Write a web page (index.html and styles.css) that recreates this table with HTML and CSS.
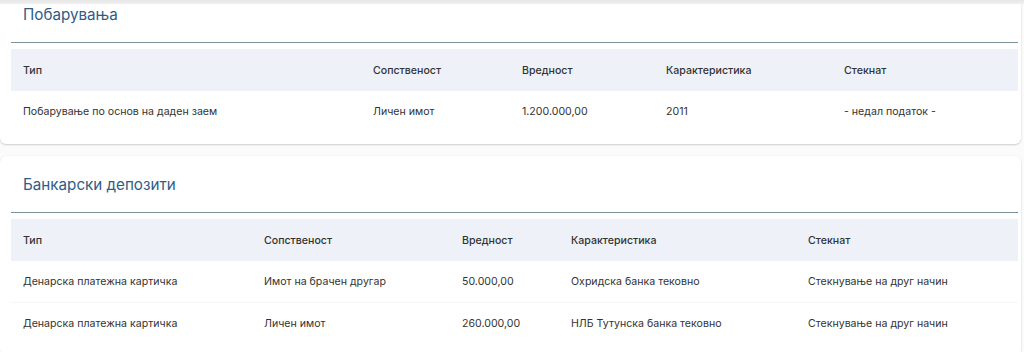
FILE: index.html
```html
<!DOCTYPE html>
<html lang="mk">
<head>
<meta charset="utf-8">
<link rel="stylesheet" href="styles.css">
</head>
<body>
<div class="topshade"></div>
<main class="page">
  <section class="card card-first">
    <h2 class="card-title">Побарувања</h2>
    <table class="data t1">
      <thead>
        <tr><th>Тип</th><th>Сопственост</th><th>Вредност</th><th>Карактеристика</th><th>Стекнат</th></tr>
      </thead>
      <tbody>
        <tr><td>Побарување по основ на даден заем</td><td>Личен имот</td><td>1.200.000,00</td><td>2011</td><td>- недал податок -</td></tr>
      </tbody>
    </table>
  </section>
  <section class="card">
    <h2 class="card-title">Банкарски депозити</h2>
    <table class="data t2">
      <thead>
        <tr><th>Тип</th><th>Сопственост</th><th>Вредност</th><th>Карактеристика</th><th>Стекнат</th></tr>
      </thead>
      <tbody>
        <tr><td>Денарска платежна картичка</td><td>Имот на брачен другар</td><td>50.000,00</td><td>Охридска банка тековно</td><td>Стекнување на друг начин</td></tr>
        <tr><td>Денарска платежна картичка</td><td>Личен имот</td><td>260.000,00</td><td>НЛБ Тутунска банка тековно</td><td>Стекнување на друг начин</td></tr>
      </tbody>
    </table>
  </section>
</main>
</body>
</html>
```
FILE: styles.css
```css
html, body {
  margin: 0;
  padding: 0;
  background: #fbfbfb;
  font-family: Inter, "Noto Sans", Arial, sans-serif;
  color: #333;
  overflow: hidden;
}
.topshade {
  position: fixed;
  top: 0;
  left: 0;
  right: 0;
  height: 4px;
  background: linear-gradient(#e6e6e6, #f0f0f0);
  z-index: 5;
}
.page {
  display: flex;
  flex-direction: column;
  gap: 12px;
  padding: 0 3px 0 0;
}
.card {
  background: #fff;
  border-radius: 6px;
  box-shadow: 0 1px 2px rgba(0,0,0,0.18), 0 0 1px rgba(0,0,0,0.08);
  padding: 17px 3px 12px 11px;
}
.card-first {
  margin-top: -14px;
}
.card-title {
  margin: 0;
  padding: 0 0 15px 12px;
  font-size: 15.2px;
  line-height: 24px;
  font-weight: 400;
  color: #2f5d85;
  border-bottom: 1px solid #7b9099;
}
.data {
  width: 100%;
  margin-top: 6px;
  border-collapse: collapse;
  table-layout: fixed;
  font-size: 10.6px;
}
.data th {
  background: #eef2f8;
  font-weight: 500;
  color: #333;
  text-align: left;
  height: 42px;
  padding: 0 12px;
}
.data td {
  height: 41px;
  padding: 0 12px;
  color: #333;
  border-bottom: 1px solid #f6f6f6;
}
.data tbody tr:last-child td {
  border-bottom: none;
}
.t1 th:nth-child(1) { width: 326px; }
.t1 th:nth-child(2) { width: 125px; }
.t1 th:nth-child(3) { width: 120px; }
.t1 th:nth-child(4) { width: 154px; }
.t2 th:nth-child(1) { width: 217px; }
.t2 th:nth-child(2) { width: 174px; }
.t2 th:nth-child(3) { width: 85px; }
.t2 th:nth-child(4) { width: 213px; }
```
